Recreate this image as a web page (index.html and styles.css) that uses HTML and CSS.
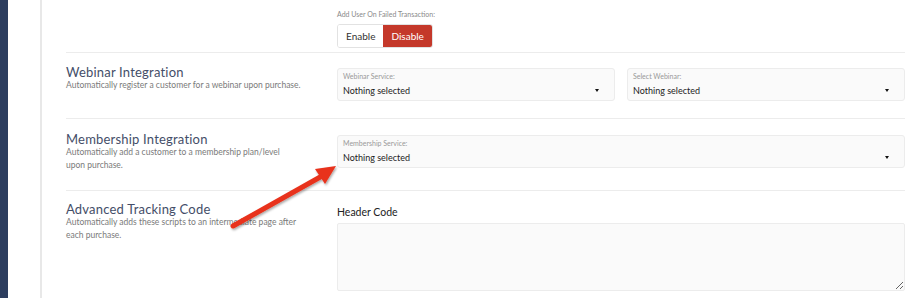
FILE: index.html
```html
<!DOCTYPE html>
<html lang="en">
<head>
<meta charset="UTF-8">
<meta name="viewport" content="width=device-width, initial-scale=1.0">
<title>Integrations</title>
<link rel="stylesheet" href="styles.css">
</head>
<body>

<div class="sidebar"></div>
<div class="gutter"></div>

<div class="main">

  <!-- failed transaction toggle -->
  <div class="row row-top">
    <div class="info"></div>
    <div class="fields">
      <div class="small-label">Add User On Failed Transaction:</div>
      <div class="btn-group">
        <span class="btn">Enable</span>
        <span class="btn active">Disable</span>
      </div>
    </div>
  </div>

  <div class="row row-webinar">
    <div class="info">
      <h3>Webinar Integration</h3>
      <p>Automatically register a customer for a webinar upon purchase.</p>
    </div>
    <div class="fields two">
      <div class="select">
        <div class="select-label">Webinar Service:</div>
        <div class="select-value">Nothing selected</div>
        <span class="caret"></span>
      </div>
      <div class="select">
        <div class="select-label">Select Webinar:</div>
        <div class="select-value">Nothing selected</div>
        <span class="caret"></span>
      </div>
    </div>
  </div>

  <div class="row row-member">
    <div class="info">
      <h3>Membership Integration</h3>
      <p>Automatically add a customer to a membership plan/level<br>upon purchase.</p>
    </div>
    <div class="fields">
      <div class="select">
        <div class="select-label">Membership Service:</div>
        <div class="select-value">Nothing selected</div>
        <span class="caret"></span>
      </div>
    </div>
  </div>

  <div class="row row-last">
    <div class="info">
      <h3>Advanced Tracking Code</h3>
      <p>Automatically adds these scripts to an intermediate page after each purchase.</p>
    </div>
    <div class="fields">
      <div class="field-title">Header Code</div>
      <textarea class="code"></textarea>
    </div>
  </div>

</div>

<!-- annotation arrow -->
<svg class="arrow" width="920" height="298" viewBox="0 0 920 298">
  <defs>
    <filter id="shadow" x="-20%" y="-20%" width="140%" height="140%">
      <feDropShadow dx="1" dy="1.5" stdDeviation="1.2" flood-color="#000" flood-opacity="0.35"/>
    </filter>
  </defs>
  <g filter="url(#shadow)">
    <line x1="233" y1="226" x2="322" y2="176" stroke="#e8321c" stroke-width="5" stroke-linecap="round"/>
    <polygon points="336,166 315,169 325,184" fill="#e8321c"/>
  </g>
</svg>

</body>
</html>
```

FILE: styles.css
```css
body {
  margin: 0;
  height: 298px;
  display: flex;
  font-family: "Lato", "Open Sans", sans-serif;
  background: #fff;
  overflow: hidden;
}

.sidebar {
  width: 8px;
  background: #2d3e5f;
}

.gutter {
  width: 32px;
  border-right: 2px solid #e8e8e8;
}

.main {
  flex: 1;
  padding: 0 15px 0 24px;
}

.row {
  display: flex;
  border-bottom: 1px solid #ececec;
}

.row-top {
  height: 53px;
  box-sizing: border-box;
  padding-top: 9px;
}

.row-webinar {
  height: 66px;
  box-sizing: border-box;
  padding-top: 15px;
}

.row-member {
  height: 72px;
  box-sizing: border-box;
  padding-top: 16px;
}

.row-last {
  border-bottom: none;
  padding-top: 14px;
}

.info {
  width: 271px;
  flex-shrink: 0;
  margin-top: -4px;
}

.row-top .info {
  margin-top: 0;
}

.info h3 {
  margin: 0;
  font-weight: 400;
  font-size: 13px;
  line-height: 16px;
  color: #444e68;
  letter-spacing: 0.2px;
}

.info p {
  max-width: 240px;
  margin: -1px 0 0;
  font-size: 8.5px;
  line-height: 13px;
  color: #7a7a7a;
}

.fields {
  flex: 1;
}

.fields.two {
  display: flex;
  gap: 12px;
}

.small-label {
  font-size: 7px;
  line-height: 10px;
  color: #8a8a8a;
  margin-bottom: 5px;
}

.btn-group {
  display: inline-flex;
  border: 1px solid #e2e2e2;
  border-radius: 3px;
  overflow: hidden;
}

.btn {
  font-size: 10px;
  line-height: 12px;
  color: #333;
  padding: 5px 8px 5px;
  background: #fff;
}

.btn.active {
  background: #c4382a;
  color: #fff;
}

.select {
  flex: 1;
  position: relative;
  height: 33px;
  box-sizing: border-box;
  background: #fafafa;
  border: 1px solid #ececec;
  border-radius: 3px;
  padding: 3px 5px 0;
}

.select-label {
  font-size: 7px;
  line-height: 9px;
  color: #999;
}

.select-value {
  font-size: 9px;
  line-height: 12px;
  color: #222;
  margin-top: 4px;
}

.caret {
  position: absolute;
  right: 15px;
  top: 20px;
  border-left: 2.5px solid transparent;
  border-right: 2.5px solid transparent;
  border-top: 3px solid #111;
}

.field-title {
  font-size: 10.5px;
  line-height: 14px;
  color: #222;
  margin-bottom: 4px;
}

.code {
  display: block;
  width: 100%;
  height: 68px;
  box-sizing: border-box;
  background: #fafafa;
  border: 1px solid #ececec;
  border-radius: 2px;
  resize: vertical;
}

.arrow {
  position: absolute;
  left: 0;
  top: 0;
  pointer-events: none;
}
```
